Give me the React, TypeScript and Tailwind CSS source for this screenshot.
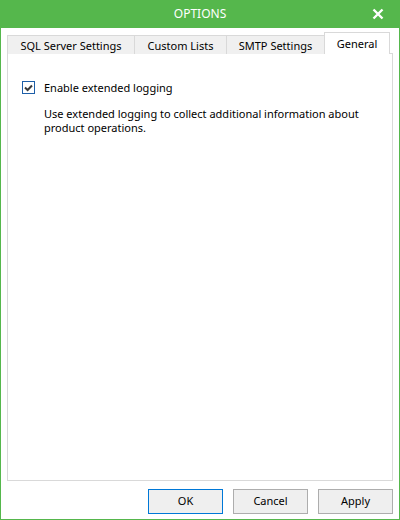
import React, { useState } from 'react';

const tabs = [
  { id: 'sql', label: 'SQL Server Settings', width: 'w-[128px]' },
  { id: 'lists', label: 'Custom Lists', width: 'w-[93px]' },
  { id: 'smtp', label: 'SMTP Settings', width: 'w-[99px]' },
  { id: 'general', label: 'General', width: 'w-[66px]' },
];

const App: React.FC = () => {
  const [active, setActive] = useState('general');
  const [extended, setExtended] = useState(true);

  return (
    <div className="w-[400px] h-[520px] flex flex-col bg-white text-[11px] text-black font-['Segoe_UI','Noto_Sans',sans-serif] border-x border-b border-[#55b74c]">
      {/* title bar */}
      <div className="h-[28px] -mx-px bg-[#55b74c] flex items-center relative">
        <div className="flex-1 text-center text-white text-[12px] leading-none">OPTIONS</div>
        <button className="absolute right-[14px] top-[6px] w-[16px] h-[16px] flex items-center justify-center">
          <svg width="12" height="12" viewBox="0 0 12 12">
            <path d="M1.5 1.5 L10.5 10.5 M10.5 1.5 L1.5 10.5" stroke="white" strokeWidth="2.4" />
          </svg>
        </button>
      </div>

      <div className="flex-1 flex flex-col px-[6px] pt-[4px]">
        {/* tabs */}
        <div className="flex items-end h-[22px] relative z-10">
          {tabs.map((t, i) => {
            const sel = t.id === active;
            return (
              <button
                key={t.id}
                onClick={() => setActive(t.id)}
                className={`${t.width} ${i > 0 ? '-ml-px' : ''} border-x border-t border-[#d9d9d9] flex items-center justify-center leading-none ${
                  sel ? 'h-[22px] bg-white pb-[1px]' : 'h-[19px] bg-[#f0f0f0] pt-[1px]'
                }`}
              >
                {t.label}
              </button>
            );
          })}
        </div>

        {/* panel */}
        <div className="-mt-px w-[386px] h-[428px] border border-[#d9d9d9] bg-white pl-[14px] pt-[27px]">
          <label className="flex items-center gap-[9px] cursor-pointer">
            <span
              onClick={() => setExtended(!extended)}
              className="w-[13px] h-[13px] border border-[#1e5fa8] bg-white flex items-center justify-center"
            >
              {extended && (
                <svg width="9" height="8" viewBox="0 0 9 8">
                  <path d="M1 3.5 L3.6 6 L8 1.5" fill="none" stroke="#3a3a3a" strokeWidth="2" />
                </svg>
              )}
            </span>
            <span className="leading-[13px]">Enable extended logging</span>
          </label>
          <p className="mt-[13px] ml-[22px] leading-[14px] w-[335px]">
            Use extended logging to collect additional information about product operations.
          </p>
        </div>

        {/* buttons */}
        <div className="flex justify-end gap-[10px] mt-[8px]">
          <button className="w-[75px] h-[25px] border border-[#0078d7] bg-[#efefef]">OK</button>
          <button className="w-[75px] h-[25px] border border-[#adadad] bg-[#efefef]">Cancel</button>
          <button className="w-[75px] h-[25px] border border-[#adadad] bg-[#efefef]">Apply</button>
        </div>
      </div>
    </div>
  );
};

export default App;
